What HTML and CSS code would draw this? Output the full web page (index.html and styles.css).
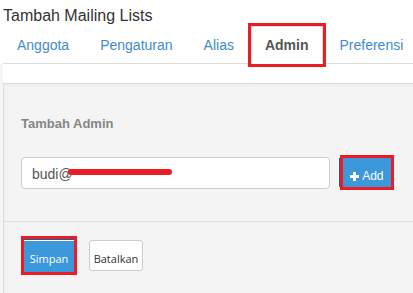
FILE: index.html
```html
<!DOCTYPE html>
<html lang="id">
<head>
<meta charset="utf-8">
<title>Tambah Mailing Lists</title>
<link rel="stylesheet" href="styles.css">
</head>
<body>
<div class="page">
  <h1 class="title">Tambah Mailing Lists</h1>
  <ul class="tabs">
    <li class="tab"><a href="#">Anggota</a></li>
    <li class="tab"><a href="#">Pengaturan</a></li>
    <li class="tab"><a href="#">Alias</a></li>
    <li class="tab active"><a href="#">Admin</a></li>
    <li class="tab"><a href="#">Preferensi</a></li>
  </ul>
  <div class="below">
    <div class="panel">
      <div class="panel-body">
        <h3 class="section-title">Tambah Admin</h3>
        <div class="input-row">
          <div class="input">budi@<span class="redact"></span></div>
          <button class="btn btn-primary btn-add highlight"><svg class="plus" width="9" height="9" viewBox="0 0 9 9"><path d="M3 0h3v3h3v3H6v3H3V6H0V3h3z" fill="#fff"/></svg> Add</button>
        </div>
      </div>
      <div class="panel-footer">
        <button class="btn btn-primary btn-save highlight">Simpan</button>
        <button class="btn btn-default btn-cancel">Batalkan</button>
      </div>
    </div>
  </div>
</div>
</body>
</html>
```
FILE: styles.css
```css
html, body {
  margin: 0;
  padding: 0;
  background: #fff;
  overflow: hidden;
}
body {
  font-family: "Liberation Sans", Arial, sans-serif;
  color: #333;
}
.page {
  padding-left: 3px;
}
.title {
  margin: 0;
  padding-top: 7px;
  font-size: 16px;
  line-height: 18px;
  font-weight: normal;
  color: #333;
}
.tabs {
  list-style: none;
  margin: 1px 0 0;
  padding: 0;
  display: flex;
  border-bottom: 1px solid #ddd;
}
.tab {
  margin: 0 3px -1px 0;
}
.tab a {
  display: block;
  padding: 8px 13px;
  line-height: 20px;
  font-size: 14px;
  color: #428bca;
  text-decoration: none;
  border: 1px solid transparent;
  white-space: nowrap;
}
.tab.active a {
  color: #555;
  font-weight: bold;
  background: #fff;
  border-color: #ddd #ddd transparent;
  outline: 3px solid #ed1c24;
}
.below {
  margin-left: -3px;
  border-left: 3px solid #f5f5f5;
  padding-top: 19px;
}
.panel {
  margin-right: -20px;
  background: #f4f4f4;
  border-top: 1px solid #dcdcdc;
  border-left: 1px solid #dcdcdc;
  box-shadow: inset 0 2px 2px rgba(0, 0, 0, 0.03);
}
.panel-body {
  padding: 32px 17px 32px;
}
.section-title {
  margin: 0;
  font-size: 13px;
  line-height: 15px;
  font-weight: bold;
  color: #858585;
}
.input-row {
  margin-top: 26px;
  display: flex;
  align-items: flex-start;
}
.input {
  width: 287px;
  height: 20px;
  padding: 6px 10px 4px;
  line-height: 20px;
  font-size: 14px;
  color: #555;
  background: #fff;
  border: 1px solid #ccc;
  border-radius: 4px;
  white-space: nowrap;
  overflow: hidden;
}
.redact {
  display: inline-block;
  width: 104px;
  height: 6px;
  margin-left: -5px;
  vertical-align: 4px;
  background: #ed1c24;
  border-radius: 3px;
}
.btn {
  font-family: "Open Sans", sans-serif;
  margin: 0;
  cursor: pointer;
}
.btn-primary {
  background: #3a98db;
  color: #fff;
  border: none;
}
.highlight {
  outline: 3px solid #ed1c24;
}
.btn-add {
  margin: 1px 0 0 13px;
  width: 48px;
  height: 29px;
  padding: 11px 0 4px;
  font-family: "Liberation Sans", Arial, sans-serif;
  font-size: 12px;
  line-height: 14px;
  box-shadow: -4px 0 0 #1f5f99;
  text-align: center;
}
.plus {
  vertical-align: -1px;
}
.panel-footer {
  border-top: 1px solid #e0e0e0;
  padding: 17px 20px 21px;
  display: flex;
  align-items: flex-start;
}
.btn-save {
  width: 50px;
  height: 33px;
  padding: 12px 0 6px;
  border-top: 1px solid #1d5f96;
  box-shadow: inset 0 1px 0 #fff;
  font-size: 11px;
  line-height: 14px;
  text-align: center;
}
.btn-default {
  background: #fff;
  color: #333;
  border: 1px solid #ccc;
  border-radius: 3px;
}
.btn-cancel {
  margin: 1px 0 0 15px;
  width: 54px;
  height: 31px;
  padding: 11px 0 4px;
  font-size: 11px;
  line-height: 14px;
  text-align: center;
}
```
